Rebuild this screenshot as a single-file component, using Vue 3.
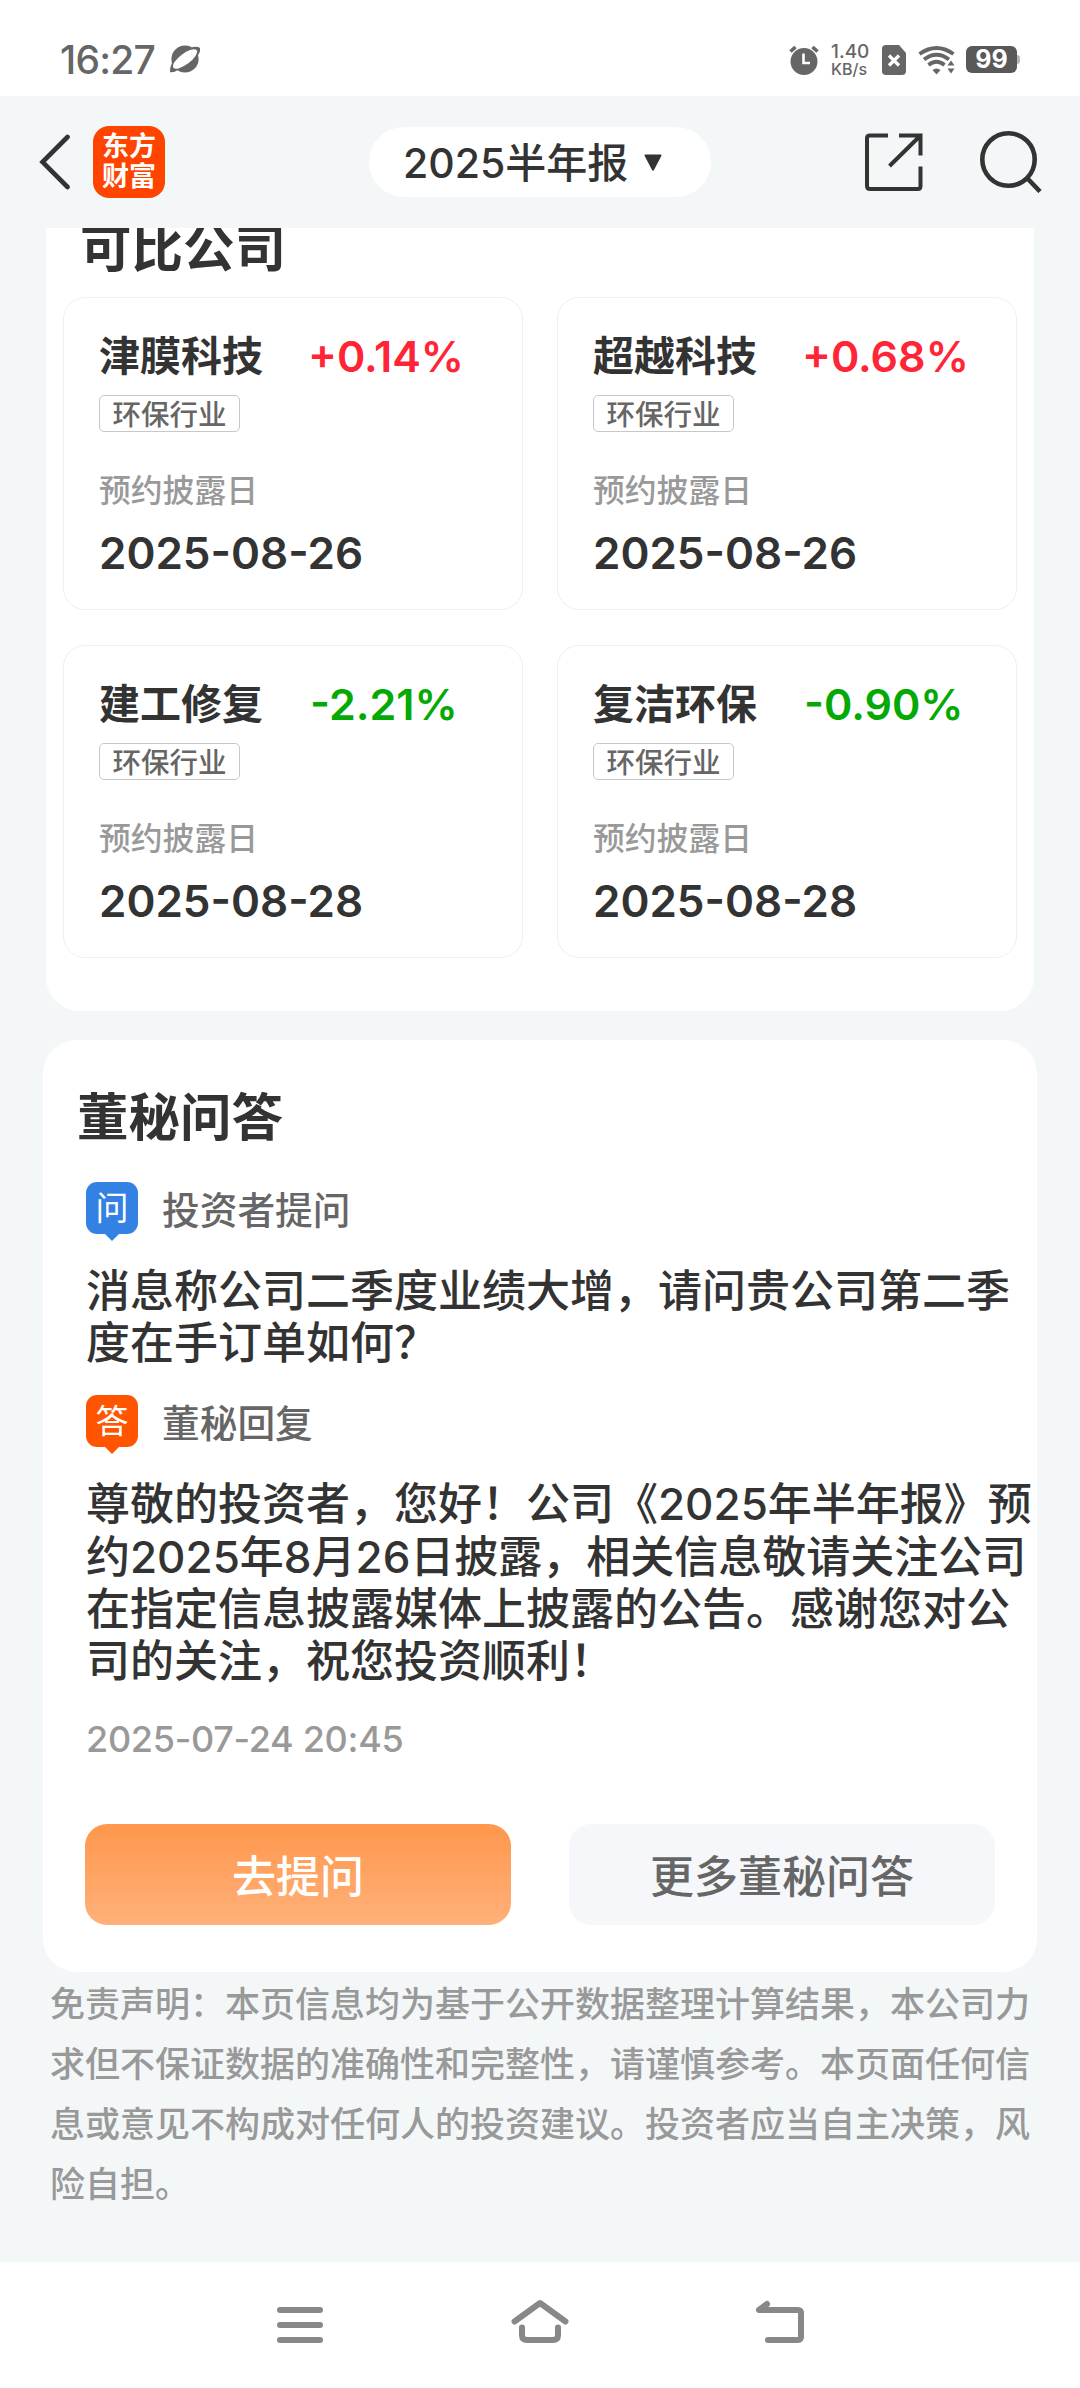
<script setup>
import { ref } from "vue";

// 可比公司列表
const companies = ref([
  { name: "津膜科技", change: "+0.14%", industry: "环保行业", date: "2025-08-26" },
  { name: "超越科技", change: "+0.68%", industry: "环保行业", date: "2025-08-26" },
  { name: "建工修复", change: "-2.21%", industry: "环保行业", date: "2025-08-28" },
  { name: "复洁环保", change: "-0.90%", industry: "环保行业", date: "2025-08-28" },
]);

// 问答内容（按行展示）
const question = ["消息称公司二季度业绩大增，请问贵公司第二季", "度在手订单如何？"];
const answer = [
  "尊敬的投资者，您好！公司《2025年半年报》预",
  "约2025年8月26日披露，相关信息敬请关注公司",
  "在指定信息披露媒体上披露的公告。感谢您对公",
  "司的关注，祝您投资顺利！",
];

const disclaimer = [
  "免责声明：本页信息均为基于公开数据整理计算结果，本公司力",
  "求但不保证数据的准确性和完整性，请谨慎参考。本页面任何信",
  "息或意见不构成对任何人的投资建议。投资者应当自主决策，风",
  "险自担。",
];
</script>

<template>
  <div class="page">
    <!-- 系统状态栏 -->
    <div class="status-bar">
      <span class="clock">16:27</span>
      <svg class="planet" width="30" height="28" viewBox="0 0 30 28">
        <circle cx="15" cy="14" r="13.6" fill="#666" />
        <path d="M0 27 Q0 20 3 17 L8 25 Q3 28 0 27 M22 2 Q28 1 30 3 Q31 7 27 11 Z" fill="#666" />
        <ellipse cx="15" cy="14" rx="14.5" ry="5.4" fill="#fff" transform="rotate(-37 15 14)" />
      </svg>
      <div class="status-icons">
        <svg width="30" height="30" viewBox="0 0 30 30">
          <circle cx="15" cy="16.5" r="13.5" fill="#666" />
          <path d="M1.5 6.5 L6.5 2 M28.5 6.5 L23.5 2" stroke="#666" stroke-width="3.6" />
          <path d="M14.5 8.5 V18 H21" fill="none" stroke="#fff" stroke-width="2.6" />
        </svg>
        <div class="speed">
          <span class="speed-num">1.40</span>
          <span class="speed-unit">KB/s</span>
        </div>
        <svg class="sim" width="24" height="30" viewBox="0 0 24 30">
          <path d="M4 0 H17 L24 8 V26 Q24 30 20 30 H4 Q0 30 0 26 V4 Q0 0 4 0 Z" fill="#666" />
          <path d="M7 10.5 L17 20.5 M17 10.5 L7 20.5" stroke="#fff" stroke-width="3.2" />
        </svg>
        <svg class="wifi" width="38" height="30" viewBox="0 0 38 30">
          <g fill="none" stroke="#666" stroke-width="3.8">
            <path d="M1.5 9 Q18.5 -3 35.5 9" />
            <path d="M6 14.5 Q18.5 5 31 14.5" />
            <path d="M10.5 20 Q18.5 13.5 26.5 20" />
          </g>
          <path d="M14.5 25 Q18.5 22 22.5 25 L18.5 29.5 Z" fill="#666" />
          <path d="M29 22 V17 L33.5 12 L38 17 V29 H29 Z" fill="#fff" />
          <path d="M29.5 20.5 L33 15.5 L36.5 20.5 Z M29.5 23.5 H36.5 L33 28.5 Z" fill="#666" />
        </svg>
        <div class="battery">99</div>
        <i class="battery-nub"></i>
      </div>
    </div>

    <!-- 顶部导航 -->
    <header class="header">
      <svg class="back" width="32" height="58" viewBox="0 0 32 58">
        <path d="M29.5 4 L4.5 29 L29.5 54" fill="none" stroke="#333" stroke-width="4.6" stroke-linecap="round" />
      </svg>
      <div class="logo">
        <span>东方</span>
        <span>财富</span>
      </div>
      <div class="period">
        <span>2025半年报</span>
        <svg width="18" height="17" viewBox="0 0 18 17">
          <path d="M1.5 0.5 H16.5 Q18 0.5 17.3 2 L10 16 Q9 17.5 8 16 L0.7 2 Q0 0.5 1.5 0.5 Z" fill="#333" />
        </svg>
      </div>
      <svg class="share" width="58" height="58" viewBox="0 0 58 58">
        <g fill="none" stroke="#333" stroke-width="4">
          <path d="M23 2.5 H5 Q2 2.5 2 5 V53 Q2 56 5 56 H53 Q55.5 56 55.5 53 V33.5" />
          <path d="M34 2.5 H55.5 V22.5 M55 3 L24.5 33" />
        </g>
      </svg>
      <svg class="search" width="62" height="62" viewBox="0 0 62 62">
        <circle cx="28.5" cy="28.5" r="26.2" fill="none" stroke="#333" stroke-width="4.6" />
        <path d="M47.5 47.5 L60 60.5" stroke="#333" stroke-width="4.6" />
      </svg>
    </header>

    <!-- 可比公司 -->
    <section class="panel compare">
      <h2 class="compare-title">可比公司</h2>
      <div class="grid">
        <div v-for="item in companies" :key="item.name" class="card">
          <div class="card-head">
            <span class="name">{{ item.name }}</span>
            <span class="change" :class="item.change.startsWith('-') ? 'down' : 'up'">{{ item.change }}</span>
          </div>
          <span class="tag">{{ item.industry }}</span>
          <div class="label">预约披露日</div>
          <div class="date">{{ item.date }}</div>
        </div>
      </div>
    </section>

    <!-- 董秘问答 -->
    <section class="panel qa">
      <h2 class="qa-title">董秘问答</h2>
      <div class="qa-head">
        <span class="badge ask">问</span>
        <span>投资者提问</span>
      </div>
      <div class="qa-text">
        <p v-for="line in question" :key="line">{{ line }}</p>
      </div>
      <div class="qa-head reply">
        <span class="badge answer">答</span>
        <span>董秘回复</span>
      </div>
      <div class="qa-text">
        <p v-for="line in answer" :key="line">{{ line }}</p>
      </div>
      <div class="time">2025-07-24 20:45</div>
      <div class="buttons">
        <button class="btn primary">去提问</button>
        <button class="btn">更多董秘问答</button>
      </div>
    </section>

    <div class="disclaimer">
      <p v-for="line in disclaimer" :key="line">{{ line }}</p>
    </div>

    <!-- 系统导航键 -->
    <nav class="nav-bar">
      <svg width="60" height="46" viewBox="0 0 60 46">
        <path d="M10 11 H50 M10 26 H50 M10 41 H50" stroke="#888" stroke-width="6" stroke-linecap="round" />
      </svg>
      <svg width="60" height="46" viewBox="0 0 60 46">
        <g fill="none" stroke="#888" stroke-width="6" stroke-linecap="round" stroke-linejoin="round">
          <path d="M4.5 22.5 L30 4 L55.5 22.5" />
          <path d="M12 28.5 V36 Q12 41 17 41 H43 Q48 41 48 36 V28.5" />
        </g>
      </svg>
      <svg width="60" height="46" viewBox="0 0 60 46">
        <path
          d="M17 5 L9 11 H48 Q51 11 51 14.5 V37.5 Q51 41 48 41 H18"
          fill="none"
          stroke="#888"
          stroke-width="6"
          stroke-linecap="round"
          stroke-linejoin="round"
        />
      </svg>
    </nav>
  </div>
</template>

<style>
body {
  margin: 0;
  background: #f3f7f8;
}
</style>

<style scoped>
.page {
  width: 1080px;
  height: 2388px;
  display: flex;
  flex-direction: column;
  overflow: hidden;
  background: #f3f7f8;
  color: #333;
  font-family: Inter, "Noto Sans CJK SC", sans-serif;
  font-weight: 500;
  white-space: nowrap;
}

h2,
p {
  margin: 0;
}

svg {
  display: block;
  flex: none;
}

/* 状态栏 */
.status-bar {
  height: 96px;
  box-sizing: border-box;
  padding: 23px 60px 0;
  display: flex;
  align-items: center;
  background: #fff;
  color: #666;
}

.clock {
  width: 110px;
  font-size: 39px;
  line-height: 60px;
  letter-spacing: -0.8px;
}

.planet {
  margin-top: -1px;
}

.status-icons {
  margin-left: auto;
  display: flex;
  align-items: center;
}

.speed {
  width: 51px;
  margin-left: 12px;
  display: flex;
  flex-direction: column;
}

.speed-num {
  font-size: 19px;
  line-height: 18px;
}

.speed-unit {
  font-size: 16px;
  line-height: 16px;
}

.wifi {
  margin: 0 10px 0 12px;
}

.battery {
  width: 51px;
  height: 27px;
  border-radius: 6px;
  background: #595959;
  color: #fff;
  font-size: 25px;
  font-weight: 700;
  line-height: 27px;
  text-align: center;
}

.battery-nub {
  width: 3px;
  height: 9px;
  border-radius: 0 3px 3px 0;
  background: #b5b5b5;
}

/* 顶部导航 */
.header {
  height: 132px;
  flex: none;
  box-sizing: border-box;
  padding: 0 38px;
  display: flex;
  align-items: center;
}

.logo {
  width: 72px;
  height: 72px;
  margin-left: 23px;
  border-radius: 16px;
  background: #ff4400;
  color: #fff;
  display: flex;
  flex-direction: column;
  align-items: center;
  justify-content: center;
  font-size: 27px;
  font-weight: 700;
  line-height: 30px;
}

.period {
  width: 342px;
  height: 70px;
  margin-left: 204px;
  box-sizing: border-box;
  padding-left: 34px;
  border-radius: 35px;
  background: #fff;
  display: flex;
  align-items: center;
  font-size: 41px;
  line-height: 70px;
}

.period span {
  padding-top: 2px;
}

.period svg {
  margin-left: 16px;
}

.share {
  margin-left: auto;
}

.search {
  margin-left: 57px;
}

/* 白色面板 */
.panel {
  flex: none;
  box-sizing: border-box;
  background: #fff;
}

.compare {
  height: 783px;
  margin: 0 46px;
  border-radius: 0 0 34px 34px;
  overflow: hidden;
}

.compare-title {
  height: 69px;
  padding-left: 34px;
  font-size: 51.5px;
  line-height: 40px;
  font-weight: 700;
}

.grid {
  padding: 0 17px;
  display: grid;
  grid-template-columns: 460px 460px;
  grid-auto-rows: 313px;
  gap: 35px 34px;
}

.card {
  box-sizing: border-box;
  padding: 33px 0 0 35px;
  border: 1px solid #efefef;
  border-radius: 22px;
}

.card-head {
  height: 50px;
  display: flex;
  align-items: center;
  font-size: 41px;
  line-height: 50px;
  font-weight: 700;
}

.name {
  width: 209px;
}

.change {
  font-size: 43px;
  font-weight: 600;
}

.up {
  color: #ff2436;
}

.down {
  padding-left: 2px;
  color: #04a904;
}

.tag {
  width: 141px;
  height: 37px;
  box-sizing: border-box;
  margin-top: 14px;
  padding-top: 2px;
  border: 1px solid #c8c8c8;
  border-radius: 5px;
  display: flex;
  align-items: center;
  justify-content: center;
  color: #666;
  font-size: 28.5px;
  line-height: 36px;
}

.label {
  margin-top: 34px;
  color: #999;
  font-size: 31.8px;
  line-height: 50px;
}

.date {
  margin-top: 10px;
  font-size: 44px;
  font-weight: 600;
  line-height: 54px;
}

/* 问答 */
.qa {
  height: 932px;
  margin: 29px 43px 0;
  padding: 42px 42px 0;
  border-radius: 34px;
}

.qa-title {
  margin-left: -8px;
  font-size: 51.5px;
  line-height: 70px;
  font-weight: 700;
}

.qa-head {
  height: 60px;
  margin-top: 28px;
  display: flex;
  align-items: center;
  gap: 24px;
  color: #666;
  font-size: 37.7px;
  line-height: 60px;
}

.qa-head.reply {
  margin-top: 24px;
}

.badge {
  width: 52px;
  height: 52px;
  margin-left: 1px;
  margin-top: -4px;
  border-radius: 11px;
  position: relative;
  color: #fff;
  font-size: 33px;
  font-weight: 400;
  line-height: 52px;
  text-align: center;
}

/* 气泡小尖角 */
.badge::after {
  content: "";
  position: absolute;
  left: 18px;
  top: 51px;
  border: 8px solid transparent;
  border-bottom: none;
}

.ask {
  background: #3381e3;
}

.ask::after {
  border-top-color: #3381e3;
}

.answer {
  background: #ff5500;
}

.answer::after {
  border-top-color: #ff5500;
}

.qa-text {
  margin-top: 25px;
  padding-left: 1px;
  font-size: 44px;
  line-height: 52.2px;
}

.time {
  margin-top: 25px;
  padding-left: 1px;
  color: #999;
  font-size: 36px;
  line-height: 54px;
  letter-spacing: -0.3px;
}

.buttons {
  margin-top: 58px;
  display: flex;
  gap: 58px;
}

.btn {
  width: 426px;
  height: 101px;
  box-sizing: border-box;
  padding: 5px 0 0;
  border: none;
  border-radius: 22px;
  background: #f6f7fa;
  color: #666;
  font-family: inherit;
  font-size: 44px;
  font-weight: 500;
  line-height: 96px;
}

.primary {
  background: linear-gradient(#ff974c, #ffb07a);
  color: #fff;
}

.disclaimer {
  flex: 1;
  padding: 2px 0 0 50px;
  color: #999;
  font-size: 35px;
  line-height: 60px;
}

/* 底部导航键 */
.nav-bar {
  height: 126px;
  flex: none;
  box-sizing: border-box;
  padding-top: 37px;
  display: flex;
  justify-content: center;
  gap: 180px;
  background: #fff;
}
</style>
